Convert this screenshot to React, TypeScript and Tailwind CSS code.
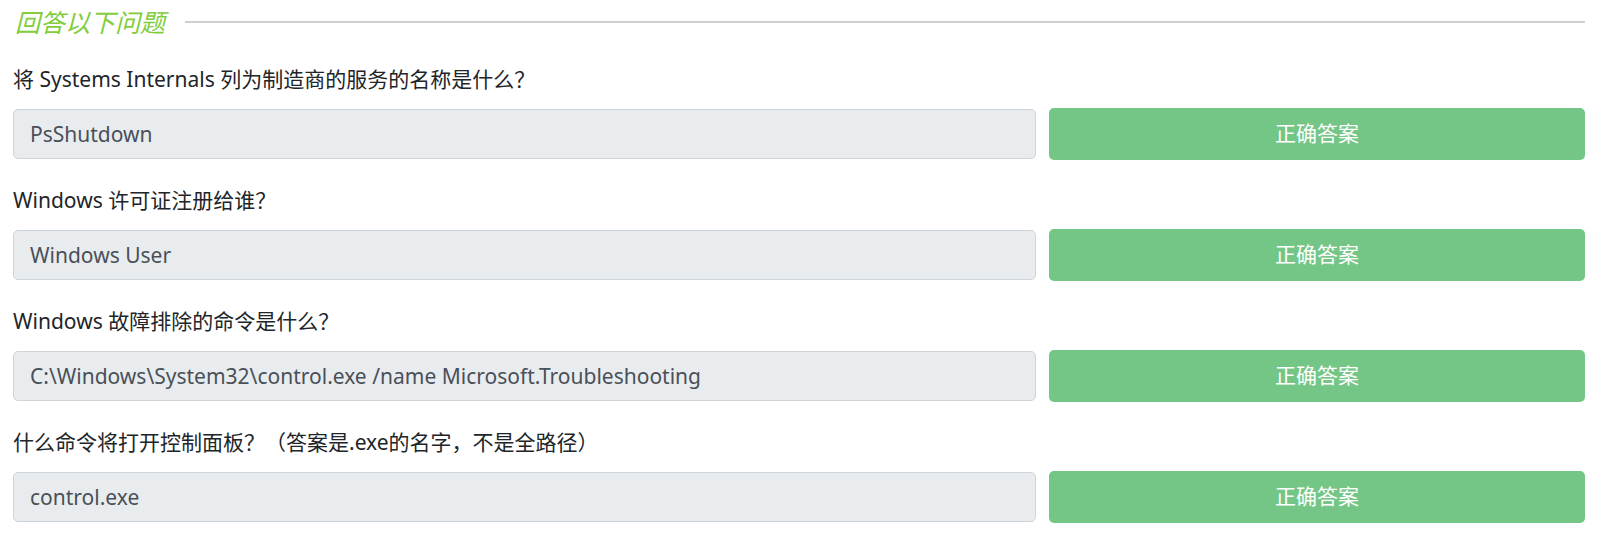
import React from 'react';

const questions = [
  { id: 1, label: '将 Systems Internals 列为制造商的服务的名称是什么？', answer: 'PsShutdown' },
  { id: 2, label: 'Windows 许可证注册给谁？', answer: 'Windows User' },
  { id: 3, label: 'Windows 故障排除的命令是什么？', answer: 'C:\\Windows\\System32\\control.exe /name Microsoft.Troubleshooting' },
  { id: 4, label: '什么命令将打开控制面板？（答案是.exe的名字，不是全路径）', answer: 'control.exe' },
];

const font = "font-['Noto_Sans','Noto_Sans_CJK_SC',sans-serif]";

const App = () => {
  return (
    <div className={`${font} bg-white w-[1604px] h-[535px] pl-[13px] pr-[19px] text-[#212529]`}>
      {/* 标题 */}
      <div className="flex items-center h-[44px]">
        <h2 className="italic text-[25px] leading-none text-[#82cd3c] pl-[2px]">回答以下问题</h2>
        <div className="flex-1 ml-[20px] h-[2px] bg-[#d0d0d0]"></div>
      </div>

      <div className="mt-[20px]">
        {questions.map((q) => (
          <div key={q.id} className="mb-[25px]">
            <p className="h-[30px] leading-[30px] text-[21px] whitespace-nowrap">{q.label}</p>
            <div className="mt-[14px] flex items-center gap-[13px] h-[52px]">
              <input
                type="text"
                readOnly
                value={q.answer}
                className="flex-1 h-[50px] px-[16px] rounded-[5px] border border-[#ced4da] bg-[#e9ecef] text-[#495057] text-[21px] outline-none"
              />
              <button
                disabled
                className="w-[536px] h-[52px] rounded-[5px] bg-[#73c686] text-white text-[21px]"
              >
                正确答案
              </button>
            </div>
          </div>
        ))}
      </div>
    </div>
  );
};

export default App;
